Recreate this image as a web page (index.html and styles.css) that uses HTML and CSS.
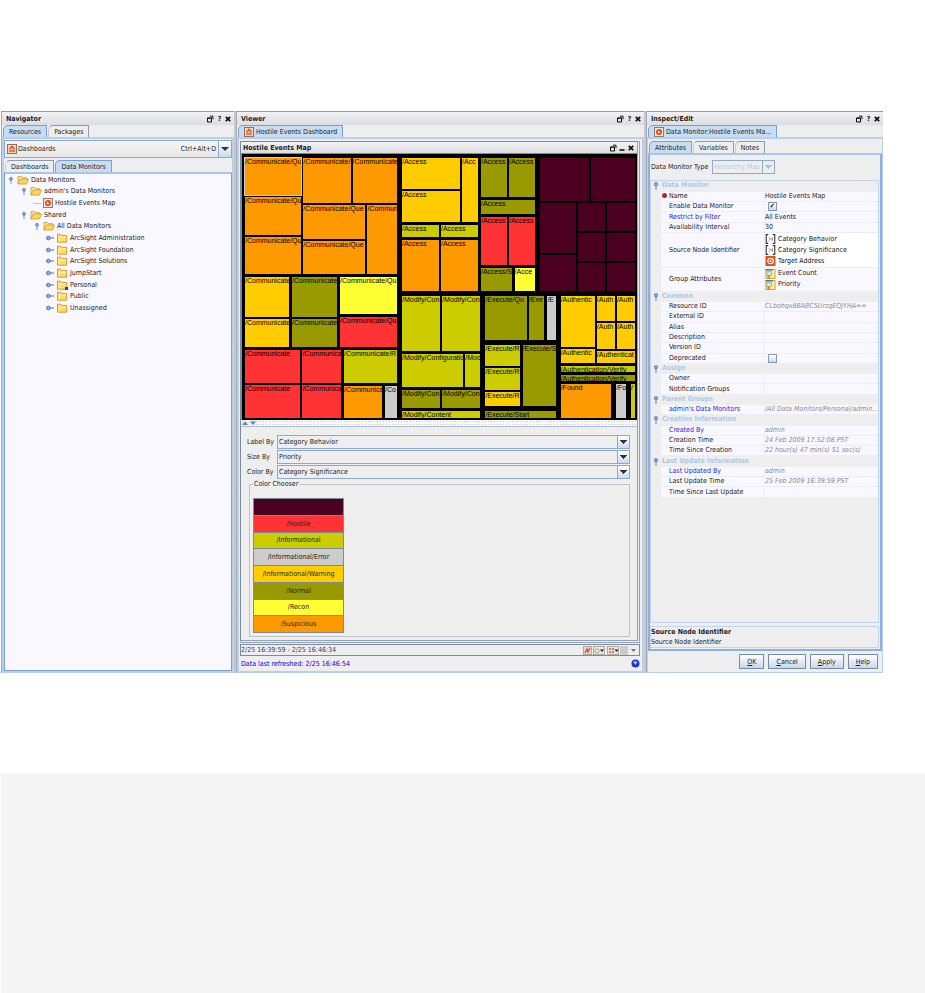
FILE: index.html
```html
<!DOCTYPE html>
<html lang="en">
<head>
    <meta charset="UTF-8">
    <meta name="viewport" content="width=device-width, initial-scale=1.0">
    <title>Hostile Events Dashboard</title>
    <link rel="stylesheet" href="styles.css">
</head>
<body>
    <!-- shared icons -->
    <svg class="sprite" aria-hidden="true">
        <symbol id="i-float" viewBox="0 0 8 8"><path d="M1.5 3h4v4h-4zM1 3.2h5M4 1.2h3v3" fill="none" stroke="#111"/></symbol>
        <symbol id="i-close" viewBox="0 0 8 8"><path d="M1.8 1.8l4.4 4.4M6.2 1.8L1.8 6.2" fill="none" stroke="#111" stroke-width="1.7"/></symbol>
        <symbol id="i-min" viewBox="0 0 8 8"><path d="M1.5 6h5" stroke="#111" stroke-width="1.6"/></symbol>
        <symbol id="i-dash" viewBox="0 0 10 10"><rect x=".5" y=".5" width="9" height="9" fill="#f6d4c4" stroke="#8b7068"/><path d="M2.5 5L5 2.2 7.5 5M3 5.5v2.5M5 5.5v2.5M7 5.5v2.5" fill="none" stroke="#e0521c" stroke-width="1.3"/></symbol>
        <symbol id="i-mon" viewBox="0 0 10 10"><rect x=".5" y=".5" width="9" height="9" fill="#f3e4dc" stroke="#8b7f7c"/><circle cx="5" cy="5" r="2.2" fill="#fff" stroke="#dd4b18" stroke-width="1.7"/><path d="M5 5L7 2.6" stroke="#dd4b18"/></symbol>
        <symbol id="i-open" viewBox="0 0 12 10"><path d="M1 9V1.5h3.5l1 1.2h4V4" fill="#fdeaa6" stroke="#c8982a" stroke-width=".8"/><path d="M1 9l2.2-5h8.3L9.4 9z" fill="#ffd95e" stroke="#c8982a" stroke-width=".8"/></symbol>
        <symbol id="i-folder" viewBox="0 0 12 10"><path d="M1.5 9.2v-8h3.2l1 1.2h5v6.8z" fill="#ffdb66" stroke="#c8962a" stroke-width=".9"/><path d="M2.5 4.2H10M3.2 4.2v4.3" stroke="#fff3c0"/></symbol>
        <symbol id="i-down" viewBox="0 0 6 10"><path d="M3 5v5" stroke="#6f8fc4" stroke-width="1.2"/><circle cx="3" cy="3.6" r="1.8" fill="#9db8ea" stroke="#4a6fae"/></symbol>
        <symbol id="i-right" viewBox="0 0 8 6"><path d="M3 3h5" stroke="#4a6fae"/><circle cx="2.4" cy="3" r="1.8" fill="#9db8ea" stroke="#4a6fae"/></symbol>
        <symbol id="i-cat" viewBox="0 0 11 11"><path d="M3 .7H.8v9.600H3M8 .7h2.200v9.600H8" fill="none" stroke="#333" stroke-width="1.2"/><path d="M3.500 3.500l2 2-2 2M7.500 3.500v4M5.500 5.500h2" stroke="#888" fill="none"/></symbol>
        <symbol id="i-target" viewBox="0 0 11 11"><rect width="11" height="11" fill="#d9541e"/><circle cx="5.5" cy="5.5" r="3" fill="none" stroke="#fff" stroke-width="1.3"/><circle cx="5.5" cy="5.5" r="1" fill="#fff"/></symbol>
        <symbol id="i-attr" viewBox="0 0 11 11"><rect x=".5" y=".5" width="10" height="10" fill="#fff08a" stroke="#c9a53a"/><path d="M0 .8h8" stroke="#3a76c4" stroke-width="1.6"/><rect x="1.5" y="3" width="5" height="4" fill="#d5e5f4" stroke="#7f93a8" stroke-width=".7"/><path d="M3.5 7v4" stroke="#f08b12" stroke-width="3"/></symbol>
    </svg>

    <main class="console">
        <section class="panel">
            <header class="titlebar">
                <h2>Navigator</h2>
                <button aria-label="Float"><svg><use href="#i-float"/></svg></button><button aria-label="Help">?</button><button aria-label="Close"><svg><use href="#i-close"/></svg></button>
            </header>
            <nav class="tabs"><button class="on">Resources</button><button>Packages</button></nav>
            <div class="frame nav-frame">
                <div class="resource-picker">
                    <svg class="icon"><use href="#i-dash"/></svg><span>Dashboards</span><kbd>Ctrl+Alt+D</kbd>
                    <button class="drop" aria-label="Choose resource"></button>
                </div>
                <nav class="tabs"><button>Dashboards</button><button class="on">Data Monitors</button></nav>
                <div class="tree-box">
                    <ul class="tree">
                        <li><svg class="knob"><use href="#i-down"/></svg><svg class="folder"><use href="#i-open"/></svg>Data Monitors</li>
                        <li class="l1"><svg class="knob"><use href="#i-down"/></svg><svg class="folder"><use href="#i-open"/></svg>admin's Data Monitors</li>
                        <li class="l2 leaf"><svg class="icon"><use href="#i-mon"/></svg>Hostile Events Map</li>
                        <li class="l1"><svg class="knob"><use href="#i-down"/></svg><svg class="folder"><use href="#i-open"/></svg>Shared</li>
                        <li class="l2"><svg class="knob"><use href="#i-down"/></svg><svg class="folder"><use href="#i-open"/></svg>All Data Monitors</li>
                        <li class="l3"><svg class="knob"><use href="#i-right"/></svg><svg class="folder"><use href="#i-folder"/></svg>ArcSight Administration</li>
                        <li class="l3"><svg class="knob"><use href="#i-right"/></svg><svg class="folder"><use href="#i-folder"/></svg>ArcSight Foundation</li>
                        <li class="l3"><svg class="knob"><use href="#i-right"/></svg><svg class="folder"><use href="#i-folder"/></svg>ArcSight Solutions</li>
                        <li class="l3"><svg class="knob"><use href="#i-right"/></svg><svg class="folder"><use href="#i-folder"/></svg>JumpStart</li>
                        <li class="l3"><svg class="knob"><use href="#i-right"/></svg><svg class="folder" viewBox="0 0 12 10"><use href="#i-folder"/><path d="M9 7h3v3H9z" fill="#2b3fb0"/></svg>Personal</li>
                        <li class="l3"><svg class="knob"><use href="#i-right"/></svg><svg class="folder"><use href="#i-folder"/></svg>Public</li>
                        <li class="l3"><svg class="knob"><use href="#i-right"/></svg><svg class="folder"><use href="#i-folder"/></svg>Unassigned</li>
                    </ul>
                </div>
            </div>
        </section>

        <section class="panel">
            <header class="titlebar">
                <h2>Viewer</h2>
                <button aria-label="Float"><svg><use href="#i-float"/></svg></button><button aria-label="Help">?</button><button aria-label="Close"><svg><use href="#i-close"/></svg></button>
            </header>
            <nav class="tabs"><button class="on"><svg class="icon"><use href="#i-dash"/></svg>Hostile Events Dashboard</button></nav>
            <div class="frame view-frame">
                <div class="map-window">
                    <header class="titlebar">
                        <h2>Hostile Events Map</h2>
                        <button aria-label="Float"><svg><use href="#i-float"/></svg></button><button aria-label="Minimize"><svg><use href="#i-min"/></svg></button><button aria-label="Close"><svg><use href="#i-close"/></svg></button>
                    </header>
                    <div class="treemap" id="treemap"></div>
                    <div class="splitter"><svg viewBox="0 0 16 6"><path d="M1 5h6L4 1.5zM9 1.5h6L12 5z" fill="#5f86b8"/></svg></div>
                    <div class="settings">
                        <div class="pickers">
                            <label for="labelBy">Label By</label>
                            <select id="labelBy"><option>Category Behavior</option></select>
                            <label for="sizeBy">Size By</label>
                            <select id="sizeBy"><option>Priority</option></select>
                            <label for="colorBy">Color By</label>
                            <select id="colorBy"><option>Category Significance</option></select>
                        </div>
                        <fieldset>
                            <legend>Color Chooser</legend>
                            <div class="swatches">
                                <button class="purple" aria-label="No significance"></button>
                                <button class="red">/Hostile</button>
                                <button class="lime">/Informational</button>
                                <button class="gray">/Informational/Error</button>
                                <button class="gold">/Informational/Warning</button>
                                <button class="olive">/Normal</button>
                                <button class="yellow">/Recon</button>
                                <button class="orange">/Suspicious</button>
                            </div>
                        </fieldset>
                    </div>
                </div>
                <div class="range">
                    <span>2/25 16:39:59 - 2/25 16:46:34</span>
                    <svg viewBox="0 0 56 9">
                        <rect x=".5" y=".5" width="8" height="8" fill="#ddd" stroke="#aaa"/><path d="M2 7l2-4 1 3 2-4" stroke="#e0521c" stroke-width="1.4" fill="none"/>
                        <rect x="10.5" y=".5" width="11" height="8" fill="#e6e6e6" stroke="#aaa"/><circle cx="14" cy="5" r="2" fill="#fff" stroke="#d98a64"/><path d="M17 3.5h4L19 6z" fill="#222"/>
                        <rect x="24.5" y=".5" width="11" height="8" fill="#e6e6e6" stroke="#aaa"/><path d="M26 3h5M26 6h5" stroke="#e0521c" stroke-width="1.5" stroke-dasharray="2 1"/><path d="M31.5 3.5h4L33.5 6z" fill="#222"/>
                        <rect x="37" y="0" width="8" height="9" fill="#ccc"/>
                        <path d="M48 3h5l-2.5 3z" fill="#777"/>
                    </svg>
                </div>
                <div class="refreshed">
                    <span>Data last refreshed: 2/25 16:46:54</span>
                    <svg viewBox="0 0 9 9"><circle cx="4.5" cy="4.5" r="4" fill="#2434c8"/><path d="M2 2.5h4.5L4.5 6z" fill="#a9d8ff"/></svg>
                </div>
            </div>
        </section>

        <section class="panel">
            <header class="titlebar">
                <h2>Inspect/Edit</h2>
                <button aria-label="Float"><svg><use href="#i-float"/></svg></button><button aria-label="Help">?</button><button aria-label="Close"><svg><use href="#i-close"/></svg></button>
            </header>
            <nav class="tabs"><button class="on"><svg class="icon"><use href="#i-mon"/></svg>Data Monitor:Hostile Events Ma...</button></nav>
            <div class="frame inspect-frame">
                <nav class="tabs"><button class="on">Attributes</button><button>Variables</button><button>Notes</button></nav>
                <div class="attributes">
                    <div class="type-row">
                        <label for="monitorType">Data Monitor Type</label>
                        <select id="monitorType" disabled><option>Hierarchy Map</option></select>
                    </div>
                    <div class="grid-box">
                        <table class="props">
                            <colgroup><col class="c-knob"><col class="c-name"><col></colgroup>
                            <tbody>
                                <tr class="group"><td><svg><use href="#i-down"/></svg></td><th colspan="2">Data Monitor</th></tr>
                                <tr><td></td><th class="required">Name</th><td>Hostile Events Map</td></tr>
                                <tr><td></td><th><label for="enabled">Enable Data Monitor</label></th><td><input type="checkbox" id="enabled" checked></td></tr>
                                <tr><td></td><th><a href="#">Restrict by Filter</a></th><td>All Events</td></tr>
                                <tr><td></td><th>Availability Interval</th><td>30</td></tr>
                                <tr><td></td><th>Source Node Identifier</th><td class="nodes"><div class="item"><svg><use href="#i-cat"/></svg>Category Behavior</div><div class="item"><svg><use href="#i-cat"/></svg>Category Significance</div><div class="item"><svg><use href="#i-target"/></svg>Target Address</div></td></tr>
                                <tr><td></td><th>Group Attributes</th><td><div class="item"><svg><use href="#i-attr"/></svg>Event Count</div><div class="item"><svg><use href="#i-attr"/></svg>Priority</div></td></tr>
                                <tr class="group"><td><svg><use href="#i-down"/></svg></td><th colspan="2">Common</th></tr>
                                <tr><td></td><th>Resource ID</th><td class="fixed">CLbohqx8BABC5UrzqEQJYHA==</td></tr>
                                <tr><td></td><th>External ID</th><td></td></tr>
                                <tr><td></td><th>Alias</th><td></td></tr>
                                <tr><td></td><th>Description</th><td></td></tr>
                                <tr><td></td><th>Version ID</th><td></td></tr>
                                <tr><td></td><th><label for="deprecated">Deprecated</label></th><td><input type="checkbox" id="deprecated"></td></tr>
                                <tr class="group"><td><svg><use href="#i-down"/></svg></td><th colspan="2">Assign</th></tr>
                                <tr><td></td><th>Owner</th><td></td></tr>
                                <tr><td></td><th>Notification Groups</th><td></td></tr>
                                <tr class="group"><td><svg><use href="#i-down"/></svg></td><th colspan="2">Parent Groups</th></tr>
                                <tr><td></td><th><a href="#">admin's Data Monitors</a></th><td class="fixed">/All Data Monitors/Personal/admin...</td></tr>
                                <tr class="group"><td><svg><use href="#i-down"/></svg></td><th colspan="2">Creation Information</th></tr>
                                <tr><td></td><th><a href="#">Created By</a></th><td class="fixed">admin</td></tr>
                                <tr><td></td><th>Creation Time</th><td class="fixed">24 Feb 2009 17:52:08 PST</td></tr>
                                <tr><td></td><th>Time Since Creation</th><td class="fixed">22 hour(s) 47 min(s) 51 sec(s)</td></tr>
                                <tr class="group"><td><svg><use href="#i-down"/></svg></td><th colspan="2">Last Update Information</th></tr>
                                <tr><td></td><th><a href="#">Last Updated By</a></th><td class="fixed">admin</td></tr>
                                <tr><td></td><th>Last Update Time</th><td class="fixed">25 Feb 2009 16:39:59 PST</td></tr>
                                <tr><td></td><th>Time Since Last Update</th><td></td></tr>
                            </tbody>
                        </table>
                    </div>
                    <div class="hint"><strong>Source Node Identifier</strong><span>Source Node Identifier</span></div>
                </div>
                <div class="actions">
                    <button><u>O</u>K</button><button><u>C</u>ancel</button><button><u>A</u>pply</button><button><u>H</u>elp</button>
                </div>
            </div>
        </section>
    </main>
    <div class="page-foot"></div>
    <script src="treemap.js"></script>
</body>
</html>
```

FILE: treemap.js
```js
// weight, colour, label
function tile(w, color, label) {
    return { w: w, color: color, label: label || '' };
}
function row(w, gap, items) {
    return { w: w, gap: gap, dir: 'row', items: items };
}
function col(w, gap, items) {
    return { w: w, gap: gap, dir: 'col', items: items };
}

// labels are cut to the room that each tile has
const events = row(1, 'wide', [
    col(152, 'mid', [
        row(116, 'thin', [
            col(57, 'thin', [
                tile(1, 'orange picked', '/Communicate/Qu'),
                tile(1, 'orange', '/Communicate/Qu'),
                tile(1, 'orange', '/Communicate/Qu')
            ]),
            col(95, 'thin', [
                row(45, 'thin', [tile(48, 'orange', '/Communicate/'), tile(45, 'orange', '/Communicate')]),
                row(68, 'thin', [
                    col(63, 'thin', [tile(1, 'orange', '/Communicate/Que'), tile(1, 'orange', '/Communicate/Que')]),
                    tile(30, 'orange', '/Commun')
                ])
            ])
        ]),
        row(70, 'mid', [
            col(44, 'thin', [tile(39, 'gold', '/Communicate'), tile(28, 'gold', '/Communicate')]),
            col(45, 'thin', [tile(39, 'olive', '/Communicate'), tile(28, 'olive', '/Communicate')]),
            col(57, 'mid', [tile(36, 'yellow', '/Communicate/Qu'), tile(30, 'red', '/Communicate/Qu')])
        ]),
        row(68, 'mid', [
            row(96, 'thin', [
                col(56, 'thin', [tile(1, 'red', '/Communicate'), tile(1, 'red', '/Communicate')]),
                col(39, 'thin', [tile(1, 'red', '/Communica'), tile(1, 'red', '/Communica')])
            ]),
            col(53, 'mid', [
                tile(1, 'lime', '/Communicate/R'),
                row(1, 'mid', [tile(38, 'orange', '/Communica'), tile(12, 'gray', '/Co')])
            ])
        ])
    ]),
    col(233, 'wide', [
        row(133, 'wide', [
            row(133, 'mid', [
                col(76, 'mid', [
                    row(63, 'thin', [
                        col(58, 'thin', [tile(1, 'gold', '/Access'), tile(1, 'gold', '/Access')]),
                        tile(16, 'gold', '/Acc')
                    ]),
                    row(12, 'thin', [tile(1, 'lime', '/Access'), tile(1, 'lime', '/Access')]),
                    row(50, 'thin', [tile(1, 'orange', '/Access'), tile(1, 'orange', '/Access')])
                ]),
                col(54, 'mid', [
                    row(39, 'thin', [tile(1, 'olive', '/Access'), tile(1, 'olive', '/Access')]),
                    tile(14, 'olive', '/Access'),
                    row(49, 'thin', [tile(1, 'red', '/Access'), tile(1, 'red', '/Access')]),
                    row(23, 'mid', [tile(30, 'olive', '/Access/S'), tile(20, 'yellow', '/Acce')])
                ])
            ]),
            col(95, 'thin', [
                row(43, 'thin', [tile(49, 'purple'), tile(44, 'purple')]),
                row(88, 'thin', [
                    col(36, 'thin', [tile(50, 'purple'), tile(36, 'purple')]),
                    col(28, 'thin', [tile(1, 'purple'), tile(1, 'purple'), tile(1, 'purple')]),
                    col(28, 'thin', [tile(1, 'purple'), tile(1, 'purple'), tile(1, 'purple')])
                ])
            ])
        ]),
        row(122, 'wide', [
            col(78, 'mid', [
                row(54, 'thin', [tile(1, 'lime', '/Modify/Con'), tile(1, 'lime', '/Modify/Con')]),
                row(32, 'thin', [tile(61, 'lime', '/Modify/Configuratio'), tile(15, 'lime', '/Mod')]),
                row(18, 'thin', [tile(1, 'olive', '/Modify/Con'), tile(1, 'olive', '/Modify/Con')]),
                tile(7, 'lime', '/Modify/Content')
            ]),
            col(70, 'wide', [
                row(44, 'mid', [
                    row(57, 'thin', [tile(40, 'olive', '/Execute/Qu'), tile(15, 'olive', '/Exe')]),
                    tile(8, 'gray', '/E')
                ]),
                row(61, 'mid', [
                    col(33, 'thin', [
                        tile(21, 'lime', '/Execute/R'),
                        tile(21, 'lime', '/Execute/R'),
                        tile(14, 'gold', '/Execute/R')
                    ]),
                    tile(32, 'olive', '/Execute/S')
                ]),
                tile(7, 'olive', '/Execute/Start')
            ]),
            col(74, 'mid', [
                row(68, 'thin', [
                    col(34, 'thin', [tile(51, 'gold', '/Authentic'), tile(14, 'gold', '/Authentic')]),
                    col(38, 'thin', [
                        row(25, 'thin', [tile(1, 'gold', '/Auth'), tile(1, 'gold', '/Auth')]),
                        row(26, 'thin', [tile(1, 'gold', '/Auth'), tile(1, 'gold', '/Auth')]),
                        tile(12, 'gold', '/Authenticat')
                    ])
                ]),
                tile(6, 'lime', '/Authentication/Verify'),
                tile(6, 'olive', '/Authentication/Verify'),
                row(34, 'wide', [
                    tile(51, 'orange', '/Found'),
                    tile(10, 'gray', '/Fo'),
                    tile(4, 'lime', '/')
                ])
            ])
        ])
    ])
]);

function build(node) {
    const el = document.createElement('div');
    el.style.flexGrow = node.w;
    if (node.items) {
        el.className = 'split ' + node.dir + ' ' + node.gap;
        node.items.forEach(item => el.appendChild(build(item)));
    } else {
        el.className = 'tile ' + node.color;
        el.textContent = node.label;
    }
    return el;
}

document.getElementById('treemap').appendChild(build(events));
```

FILE: styles.css
```css
* {
    box-sizing: border-box;
}
body {
    margin: 0;
    background: #fff;
    color: #222;
    font-family: "DejaVu Sans Condensed", "DejaVu Sans", sans-serif;
    font-size: 7px;
    line-height: 10px;
}
button, select, input, kbd {
    margin: 0;
    padding: 0;
    border: 0;
    background: none;
    color: inherit;
    font: inherit;
}
h2 {
    margin: 0;
    font-size: 7px;
    font-weight: bold;
}
a {
    color: #1a1af0;
    text-decoration: none;
}
.sprite {
    display: none;
}
.icon {
    width: 10px;
    height: 10px;
    flex: none;
}

.console {
    display: grid;
    grid-template-columns: 233fr 408fr 237fr;
    gap: 2px;
    min-height: 560px;
    margin: 111px 42px 0 1px;
    background: #c4c8d0;
}
.panel {
    display: flex;
    flex-direction: column;
    min-width: 0;
    border-top: 1px solid #999;
    border-left: 1px solid #aaa;
    background: #eee;
}
.titlebar {
    display: flex;
    align-items: center;
    height: 13px;
    padding: 0 1px 0 4px;
    background: linear-gradient(#f2f2f4, #dcdde2);
    color: #222;
}
.titlebar h2 {
    flex: 1;
}
.titlebar button {
    width: 9px;
    font-weight: bold;
    text-align: center;
}
.titlebar svg {
    display: block;
    width: 8px;
    height: 8px;
}

.tabs {
    display: flex;
    gap: 1px;
    height: 12px;
    padding-left: 1px;
}
.tabs button {
    display: flex;
    align-items: center;
    gap: 2px;
    padding: 0 5px;
    border: 1px solid #8b9bb0;
    border-bottom: 0;
    border-left-color: #c5ced9;
    border-top-left-radius: 5px;
    background: #eee;
    white-space: nowrap;
}
.tabs .on {
    background: #c8ddf2;
    border-color: #7ba0d0;
}
.frame {
    display: flex;
    flex: 1;
    flex-direction: column;
    border: 2px solid #b8d0f0;
}

/* navigator */
.nav-frame {
    padding-top: 1px;
}
.resource-picker {
    display: flex;
    align-items: center;
    height: 18px;
    margin-bottom: 2px;
    padding-left: 2px;
    border: 1px solid #8fa9cc;
    background: linear-gradient(#f4f4f4, #e8e8e8);
}
.resource-picker span {
    flex: 1;
    padding-left: 1px;
}
.resource-picker kbd {
    padding-right: 2px;
}
.drop {
    display: flex;
    align-items: center;
    justify-content: center;
    align-self: stretch;
    width: 13px;
    border-left: 1px solid #8fa9cc;
    background: linear-gradient(#fff, #c8dcf0);
}
.drop::after {
    content: "";
    border: 4px solid transparent;
    border-top-color: #333;
    border-bottom: 0;
}
.tree-box {
    flex: 1;
    border: 1px solid #7ba0d0;
    border-top: 2px solid #a8c6ec;
    background: #f9f7ff;
}
.tree {
    display: grid;
    grid-auto-rows: 1fr;
    height: 140px;
    margin: 0;
    padding: 0 0 0 2px;
    list-style: none;
}
.tree li {
    display: flex;
    align-items: center;
    gap: 2px;
    white-space: nowrap;
}
.tree .knob {
    width: 8px;
    height: 8px;
}
.tree .folder {
    width: 12px;
    height: 10px;
}
.tree .l1 {
    padding-left: 13px;
}
.tree .l2 {
    padding-left: 26px;
}
.tree .l3 {
    padding-left: 39px;
}
.tree .leaf::before {
    content: "";
    width: 8px;
    border-top: 1px solid #b6c6e4;
}

/* viewer */
.view-frame {
    padding: 2px 2px 0 1px;
}
.map-window {
    display: flex;
    flex: 1;
    flex-direction: column;
    border: 1px solid #7d8a9c;
    border-right: 3px double #8fa3bd;
    border-bottom: 3px double #8fa3bd;
}
.map-window .titlebar {
    height: 12px;
    padding-left: 2px;
    border-bottom: 1px solid #7d8a9c;
}
.treemap {
    display: flex;
    height: 266px;
    padding: 4px 2px 2px 3px;
    border-left: 1px solid #7d8a9c;
    background: #000;
    color: #000;
    font-family: "Liberation Sans", Arial, sans-serif;
    font-size: 7px;
    line-height: 8px;
}
.split {
    display: flex;
    flex: 1 1 0;
    min-width: 0;
    min-height: 0;
}
.split.col {
    flex-direction: column;
}
.thin {
    gap: 2px;
}
.mid {
    gap: 3px;
}
.wide {
    gap: 5px;
}
.tile {
    flex: 1 1 0;
    min-width: 0;
    min-height: 0;
    overflow: hidden;
    white-space: nowrap;
}
.picked {
    outline: 1px solid #ccc;
}
.purple {
    background: #4b0022;
}
.red {
    background: #ff3333;
}
.lime {
    background: #cccc00;
}
.gray {
    background: #cccccc;
}
.gold {
    background: #ffcc00;
}
.olive {
    background: #999900;
}
.yellow {
    background: #ffff33;
}
.orange {
    background: #ff9900;
}
.splitter {
    height: 7px;
    border-bottom: 1px solid #aebfd6;
    background: radial-gradient(#ccc 25%, #f8f8f8 30%) 0 0 / 3px 3px;
}
.splitter svg {
    display: block;
    width: 16px;
    height: 6px;
    background: #eee;
}
.settings {
    display: flex;
    flex: 1;
    flex-direction: column;
    padding: 8px 7px 3px 6px;
}
.pickers {
    display: grid;
    grid-template-columns: 30px 1fr;
    row-gap: 1px;
    align-items: center;
    white-space: nowrap;
}
select {
    height: 14px;
    padding: 0 14px 0 1px;
    border: 1px solid #8fa9cc;
    border-radius: 0;
    appearance: none;
    background:
        linear-gradient(#333, #333) right 2px top 4px / 7px 1px no-repeat,
        linear-gradient(#333, #333) right 3px top 5px / 5px 1px no-repeat,
        linear-gradient(#333, #333) right 4px top 6px / 3px 1px no-repeat,
        linear-gradient(#333, #333) right 5px top 7px / 1px 1px no-repeat,
        linear-gradient(#8fa9cc, #8fa9cc) right 11px top 0 / 1px 100% no-repeat,
        linear-gradient(#fff, #c8dcf0) right 0 top 0 / 11px 100% no-repeat,
        #eee;
}
select:disabled {
    color: #b4cce4;
    opacity: 1;
    background:
        linear-gradient(#a9c3dd, #a9c3dd) right 2px top 4px / 7px 1px no-repeat,
        linear-gradient(#a9c3dd, #a9c3dd) right 3px top 5px / 5px 1px no-repeat,
        linear-gradient(#a9c3dd, #a9c3dd) right 4px top 6px / 3px 1px no-repeat,
        linear-gradient(#a9c3dd, #a9c3dd) right 5px top 7px / 1px 1px no-repeat,
        linear-gradient(#8fa9cc, #8fa9cc) right 11px top 0 / 1px 100% no-repeat,
        #eee;
}
fieldset {
    flex: 1;
    min-width: 0;
    margin: 0 0 0 2px;
    padding: 9px 3px 3px;
    border: 1px solid #c3c3c3;
}
legend {
    padding: 0 1px;
}
.swatches {
    display: grid;
    grid-auto-rows: 1fr;
    width: 91px;
    height: 135px;
    border: 1px solid #7a8ba0;
    border-bottom: 0;
}
.swatches button {
    border-bottom: 1px solid #7a8ba0;
    text-align: center;
}
.range {
    display: flex;
    align-items: center;
    justify-content: space-between;
    height: 12px;
    margin-top: 1px;
    border: 1px solid #7d8a9c;
    color: #1f3f78;
}
.range svg {
    width: 56px;
    height: 9px;
}
.refreshed {
    display: flex;
    align-items: center;
    justify-content: space-between;
    height: 15px;
    padding-left: 1px;
    color: #0000e6;
}
.refreshed svg {
    width: 9px;
    height: 9px;
}

/* inspect */
.inspect-frame {
    padding-top: 2px;
    border-width: 2px 1px 1px;
}
.attributes {
    display: flex;
    flex: 1;
    flex-direction: column;
    padding: 5px 1px 1px 0;
    border: 2px solid #8cb0e4;
    border-top-color: #a8c6ec;
}
.type-row {
    display: flex;
    align-items: center;
    gap: 4px;
    height: 14px;
    margin-bottom: 6px;
    padding-left: 1px;
}
.grid-box {
    flex: 1;
    margin-bottom: 3px;
    border: 1px solid #c3d5ec;
}
.props {
    width: 100%;
    height: 317px;
    border-collapse: collapse;
    table-layout: fixed;
    line-height: 9px;
}
.c-knob {
    width: 9px;
}
.c-name {
    width: 104px;
}
.props td, .props th {
    height: 10px;
    padding: 0;
    overflow: hidden;
    border-bottom: 1px solid #eeecf4;
    border-left: 1px solid #eeecf4;
    background: #f9f7ff;
    font-weight: normal;
    text-align: left;
    white-space: nowrap;
}
.props th {
    padding-left: 8px;
}
.props tr td:first-child, .props .group th {
    border-color: #eee;
    background: #eee;
}
.props .group th {
    padding-left: 1px;
    color: #aacbe6;
    font-weight: bold;
}
.props td > svg {
    display: block;
    width: 8px;
    height: 9px;
    margin: 0 auto;
}
.props .required {
    padding-left: 1px;
}
.required::before {
    content: "";
    display: inline-block;
    width: 5px;
    height: 5px;
    margin-right: 2px;
    border-radius: 50%;
    background: #b02a2a;
}
.props .fixed {
    color: #8a8a8a;
    font-style: italic;
}
.props .nodes {
    background: #fff;
    color: #111;
}
.item {
    display: flex;
    align-items: center;
    gap: 2px;
    height: 11px;
}
.item svg {
    width: 11px;
    height: 10px;
}
input[type="checkbox"] {
    display: block;
    width: 9px;
    height: 9px;
    margin-left: 3px;
    border: 1px solid #8399b4;
    appearance: none;
    background: linear-gradient(#fff, #c8dcf0);
}
input[type="checkbox"]:checked::after {
    content: "\2714";
    display: block;
    line-height: 7px;
    text-align: center;
}
.hint {
    display: flex;
    flex-direction: column;
    height: 22px;
    border: 1px solid #c3d5ec;
}
.actions {
    display: flex;
    justify-content: flex-end;
    gap: 4px;
    padding: 3px 4px;
}
.actions button {
    height: 15px;
    padding: 0 7px;
    border: 1px solid #7a8ba0;
    background: linear-gradient(#fff, #c4d8ee);
}

.page-foot {
    min-height: 222px;
    margin: 100px 0 0 1px;
    background: #f5f5f5;
}
```
